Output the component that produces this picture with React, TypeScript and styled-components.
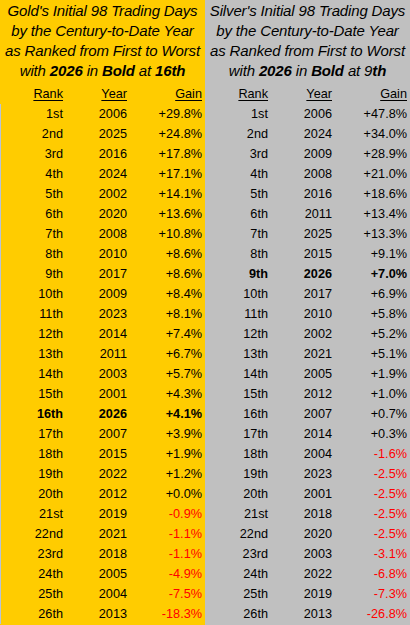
import React from "react";
import styled, { createGlobalStyle } from "styled-components";

const Global = createGlobalStyle`
  html, body { margin: 0; padding: 0; background: #ffffff; }
  body { font-family: "Liberation Sans", Arial, sans-serif; color: #000; }
`;

type Row = [string, string, string];

const goldRows: Row[] = [
  ["1st", "2006", "+29.8%"],
  ["2nd", "2025", "+24.8%"],
  ["3rd", "2016", "+17.8%"],
  ["4th", "2024", "+17.1%"],
  ["5th", "2002", "+14.1%"],
  ["6th", "2020", "+13.6%"],
  ["7th", "2008", "+10.8%"],
  ["8th", "2010", "+8.6%"],
  ["9th", "2017", "+8.6%"],
  ["10th", "2009", "+8.4%"],
  ["11th", "2023", "+8.1%"],
  ["12th", "2014", "+7.4%"],
  ["13th", "2011", "+6.7%"],
  ["14th", "2003", "+5.7%"],
  ["15th", "2001", "+4.3%"],
  ["16th", "2026", "+4.1%"],
  ["17th", "2007", "+3.9%"],
  ["18th", "2015", "+1.9%"],
  ["19th", "2022", "+1.2%"],
  ["20th", "2012", "+0.0%"],
  ["21st", "2019", "-0.9%"],
  ["22nd", "2021", "-1.1%"],
  ["23rd", "2018", "-1.1%"],
  ["24th", "2005", "-4.9%"],
  ["25th", "2004", "-7.5%"],
  ["26th", "2013", "-18.3%"],
];

const silverRows: Row[] = [
  ["1st", "2006", "+47.8%"],
  ["2nd", "2024", "+34.0%"],
  ["3rd", "2009", "+28.9%"],
  ["4th", "2008", "+21.0%"],
  ["5th", "2016", "+18.6%"],
  ["6th", "2011", "+13.4%"],
  ["7th", "2025", "+13.3%"],
  ["8th", "2015", "+9.1%"],
  ["9th", "2026", "+7.0%"],
  ["10th", "2017", "+6.9%"],
  ["11th", "2010", "+5.8%"],
  ["12th", "2002", "+5.2%"],
  ["13th", "2021", "+5.1%"],
  ["14th", "2005", "+1.9%"],
  ["15th", "2012", "+1.0%"],
  ["16th", "2007", "+0.7%"],
  ["17th", "2014", "+0.3%"],
  ["18th", "2004", "-1.6%"],
  ["19th", "2023", "-2.5%"],
  ["20th", "2001", "-2.5%"],
  ["21st", "2018", "-2.5%"],
  ["22nd", "2020", "-2.5%"],
  ["23rd", "2003", "-3.1%"],
  ["24th", "2022", "-6.8%"],
  ["25th", "2019", "-7.3%"],
  ["26th", "2013", "-26.8%"],
];

const Page = styled.div`
  display: grid;
  grid-template-columns: 205px 205px;
  width: 410px;
  height: 625px;
  overflow: hidden;
`;

const Panel = styled.section<{ $bg: string }>`
  background: ${(p) => p.$bg};
  display: flex;
  flex-direction: column;
  height: 625px;
`;

const Title = styled.div`
  padding-top: 1px;
  height: 81px;
  font-size: 15px;
  line-height: 20px;
  font-style: italic;
  text-align: center;
  white-space: nowrap;
  letter-spacing: -0.15px;
`;

const TitleLine = styled.div``;

const B = styled.b`
  font-weight: 700;
`;

const Grid = styled.div`
  display: grid;
  grid-template-columns: 62px 64px 1fr;
  padding-right: 3px;
  font-size: 12.7px;
  line-height: 20px;
`;

const Body = styled(Grid)<{ $edge: boolean }>`
  border-left: ${(p) => (p.$edge ? "1px solid #b9c4d6" : "none")};
  padding-left: ${(p) => (p.$edge ? "0" : "1px")};
  margin-top: 0;
`;

const HeadGrid = styled(Grid)`
  padding-left: 1px;
  height: 20px;
  margin-top: 2px;
`;

const Head = styled.div`
  text-align: right;
  text-decoration: underline;
  text-underline-offset: 2px;
`;

const Cell = styled.div<{ $bold?: boolean; $neg?: boolean }>`
  text-align: right;
  height: 20px;
  font-weight: ${(p) => (p.$bold ? 700 : 400)};
  color: ${(p) => (p.$neg ? "#ff0000" : "#000000")};
`;

function Table({
  title,
  rows,
  boldRank,
  bg,
  edge,
}: {
  title: React.ReactNode;
  rows: Row[];
  boldRank: string;
  bg: string;
  edge: boolean;
}) {
  return (
    <Panel $bg={bg}>
      <Title>{title}</Title>
      <HeadGrid>
        <Head>Rank</Head>
        <Head>Year</Head>
        <Head>Gain</Head>
      </HeadGrid>
      <Body $edge={edge}>
        {rows.map(([r, y, g]) => {
          const bold = r === boldRank;
          const neg = g.startsWith("-");
          return (
            <React.Fragment key={r}>
              <Cell $bold={bold}>{r}</Cell>
              <Cell $bold={bold}>{y}</Cell>
              <Cell $bold={bold} $neg={neg}>
                {g}
              </Cell>
            </React.Fragment>
          );
        })}
      </Body>
    </Panel>
  );
}

export default function App() {
  return (
    <>
      <Global />
      <Page>
        <Table
          bg="#ffcc00"
          edge
          boldRank="16th"
          rows={goldRows}
          title={
            <>
              <TitleLine>Gold's Initial 98 Trading Days</TitleLine>
              <TitleLine>by the Century-to-Date Year</TitleLine>
              <TitleLine>as Ranked from First to Worst</TitleLine>
              <TitleLine>
                with <B>2026</B> in <B>Bold</B> at <B>16th</B>
              </TitleLine>
            </>
          }
        />
        <Table
          bg="#c0c0c0"
          edge={false}
          boldRank="9th"
          rows={silverRows}
          title={
            <>
              <TitleLine>Silver's Initial 98 Trading Days</TitleLine>
              <TitleLine>by the Century-to-Date Year</TitleLine>
              <TitleLine>as Ranked from First to Worst</TitleLine>
              <TitleLine>
                with <B>2026</B> in <B>Bold</B> at 9<B>th</B>
              </TitleLine>
            </>
          }
        />
      </Page>
    </>
  );
}
